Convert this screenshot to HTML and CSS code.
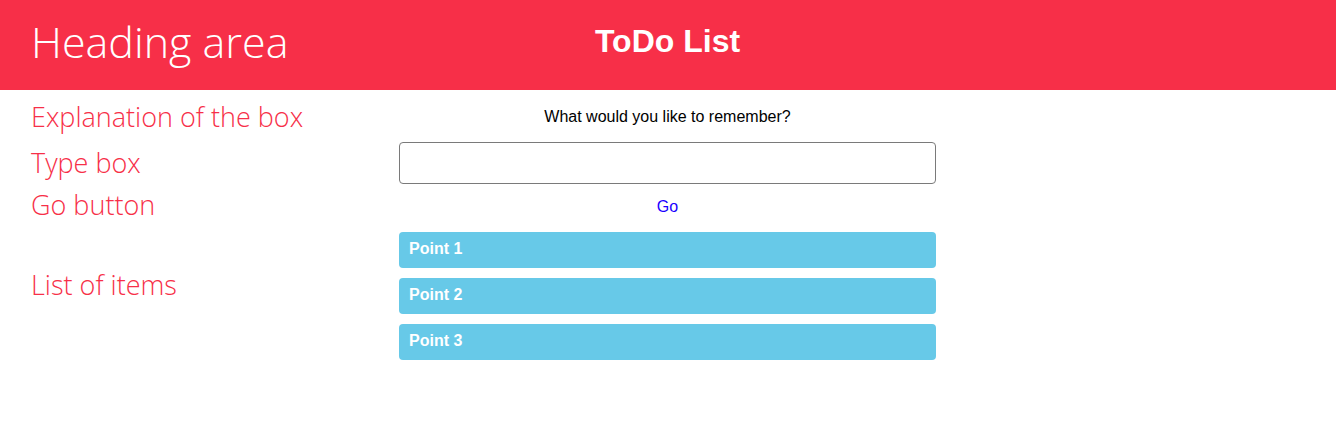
FILE: index.html
```html
<!DOCTYPE html>
<html lang="en">
<head>
<meta charset="utf-8">
<title>ToDo List</title>
<link rel="stylesheet" href="styles.css">
</head>
<body>
<header class="header">
  <div class="heading-note">Heading area</div>
  <h1 class="title">ToDo List</h1>
</header>
<main class="board">
  <div class="note note-explain">Explanation of the box</div>
  <p class="prompt">What would you like to remember?</p>

  <div class="note note-type">Type box</div>
  <input class="entry" type="text" aria-label="What would you like to remember?">

  <div class="note note-go">Go button</div>
  <div class="go-wrap"><a class="go" href="#">Go</a></div>

  <div class="note note-list">List of items</div>
  <ul class="items">
    <li class="item">Point 1</li>
    <li class="item">Point 2</li>
    <li class="item">Point 3</li>
  </ul>
</main>
</body>
</html>
```

FILE: styles.css
```css
html, body {
  margin: 0;
  padding: 0;
  background: #ffffff;
}

body {
  font-family: "Liberation Sans", Arial, sans-serif;
  font-size: 16px;
  color: #000;
}

.header {
  display: grid;
  grid-template-columns: 399px 537px 1fr;
  height: 90px;
  background: #f72f48;
}

.heading-note {
  grid-column: 1;
  padding: 12px 0 0 31px;
  font-family: "Open Sans", sans-serif;
  font-weight: 300;
  font-size: 43px;
  line-height: 60px;
  color: #ffffff;
  white-space: nowrap;
}

.title {
  grid-column: 2;
  margin: 23px 0 0;
  text-align: center;
  font-family: "Liberation Sans", Arial, sans-serif;
  font-weight: 700;
  font-size: 32px;
  line-height: 37px;
  color: #ffffff;
}

.board {
  display: grid;
  grid-template-columns: 399px 537px 1fr;
  grid-template-rows: 52px 42px 48px auto;
}

.note {
  grid-column: 1;
  padding-left: 31px;
  font-family: "Open Sans", sans-serif;
  font-weight: 300;
  font-size: 27px;
  line-height: 38px;
  color: #f72f48;
  white-space: nowrap;
}

.note-explain { grid-row: 1; margin-top: 8px; }
.note-type { grid-row: 2; margin-top: 2px; }
.note-go { grid-row: 3; margin-top: 2px; }
.note-list { grid-row: 4; margin-top: 34px; }

.prompt {
  grid-column: 2;
  grid-row: 1;
  margin: 18px 0 0;
  text-align: center;
  line-height: 18px;
}

.entry {
  grid-column: 2;
  grid-row: 2;
  box-sizing: border-box;
  width: 537px;
  height: 42px;
  margin: 0;
  padding: 0 10px;
  border: 1px solid #7a7a7a;
  border-radius: 4px;
  font: inherit;
  background: #fff;
}

.go-wrap {
  grid-column: 2;
  grid-row: 3;
  padding-top: 14px;
  text-align: center;
  line-height: 18px;
}

.go {
  color: #1a00ff;
  text-decoration: none;
}

.items {
  grid-column: 2;
  grid-row: 4;
  list-style: none;
  margin: 0;
  padding: 0;
  display: flex;
  flex-direction: column;
  gap: 10px;
}

.item {
  box-sizing: border-box;
  height: 36px;
  padding: 8px 10px 0;
  border-radius: 4px;
  background: #67c9e8;
  color: #ffffff;
  font-weight: 700;
  font-size: 16px;
  line-height: 18px;
}
```
